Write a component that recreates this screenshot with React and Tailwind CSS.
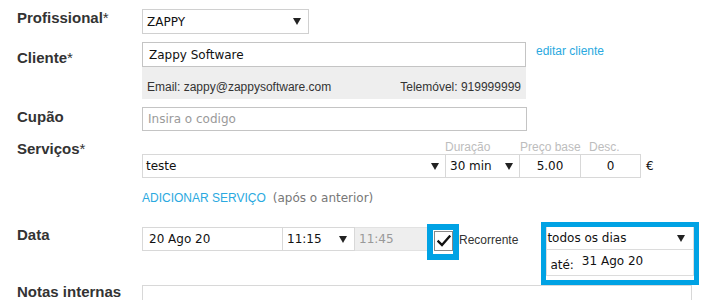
const arial = "font-['Liberation_Sans',Arial,sans-serif]"
const deja = "font-['DejaVu_Sans',Verdana,sans-serif]"

function Arrow() {
  return (
    <svg width="8" height="7" viewBox="0 0 8 7" className="shrink-0">
      <polygon points="0,0 8,0 4,7" fill="#222" />
    </svg>
  )
}

function Label({ children, className = '' }) {
  return (
    <div className={`w-[142px] shrink-0 pl-[17px] ${arial} text-[15px] font-bold leading-[18px] text-[#333] ${className}`}>
      {children}
    </div>
  )
}

function Star() {
  return <span className="font-normal">*</span>
}

export default function App() {
  return (
    <div className={`w-[706px] h-[300px] overflow-hidden bg-white ${deja} text-[12px] text-[#111]`}>
      <div className="flex pt-[9px]">
        <Label>Profissional<Star /></Label>
        <div className="flex h-[25px] w-[167px] items-center justify-between border border-[#d0d0d0] pl-[4px] pr-[7px]">
          <span>ZAPPY</span>
          <Arrow />
        </div>
      </div>

      <div className="mt-[8px] flex">
        <Label className="pt-[7px]">Cliente<Star /></Label>
        <div className="w-[384px]">
          <div className="flex h-[25px] items-center border border-[#c4c4c4] pl-[6px]">Zappy Software</div>
          <div className={`flex h-[32px] items-end justify-between bg-[#eeeeee] px-[5px] pb-[5px] ${arial} leading-[14px] text-[#333]`}>
            <span>Email: zappy@zappysoftware.com</span>
            <span>Telemóvel: 919999999</span>
          </div>
        </div>
        <span className={`ml-[10px] pt-[2px] ${arial} leading-[14px] text-[#2aa9e0]`}>editar cliente</span>
      </div>

      <div className="mt-[8px] flex">
        <Label className="pt-[1px]">Cupão</Label>
        <div className="flex h-[24px] w-[385px] items-center border border-[#c4c4c4] pl-[5px] text-[#9a9a9a]">Insira o codigo</div>
      </div>

      <div className="mt-[9px] flex">
        <Label>Serviços<Star /></Label>
        <div>
          <div className={`flex h-[14px] whitespace-nowrap ${arial} leading-[14px] text-[#bdbdbd]`}>
            <div className="w-[303px]" />
            <div className="w-[74px]">Duração</div>
            <div className="w-[61px] pl-px">Preço base</div>
            <div className="w-[60px] pl-[9px]">Desc.</div>
          </div>
          <div className="flex h-[24px] items-center">
            <div className="flex h-full w-[304px] items-center justify-between border border-[#d8d8d8] pl-[3px] pr-[6px]">
              <span>teste</span>
              <Arrow />
            </div>
            <div className="flex h-full w-[74px] items-center justify-between border-y border-r border-[#d8d8d8] pl-[4px] pr-[6px]">
              <span>30 min</span>
              <Arrow />
            </div>
            <div className="flex h-full w-[61px] items-center justify-center border-y border-r border-[#d8d8d8]">5.00</div>
            <div className="flex h-full w-[60px] items-center justify-center border-y border-r border-[#d8d8d8]">0</div>
            <span className="ml-[5px]">€</span>
          </div>
        </div>
      </div>

      <div className="mt-[13px] flex pl-[142px] leading-[14px]">
        <span className={`${arial} text-[#2aa9e0]`}>ADICIONAR SERVIÇO</span>
        <span className="ml-[7px] text-[#777]">(após o anterior)</span>
      </div>

      <div className="mt-[17px] flex h-[63px] items-start">
        <Label className="pt-[4px]">Data</Label>
        <div className="mt-[5px] flex h-[24px] items-stretch">
          <div className="flex w-[141px] items-center border border-[#d8d8d8] pl-[6px]">20 Ago 20</div>
          <div className="flex w-[72px] items-center justify-between border-y border-r border-[#d8d8d8] pl-[4px] pr-[7px]">
            <span>11:15</span>
            <Arrow />
          </div>
          <div className="flex w-[73px] items-center border-y border-r border-[#e2e2e2] bg-[#eeeeee] pl-[4px] text-[#999]">11:45</div>
        </div>
        <div className="-ml-px mt-[2px] h-[36px] w-[32px] border-[6px] border-[#00a2e4] bg-white">
          <div className="ml-px mt-px flex h-[20px] w-[19px] items-center justify-center border border-[#888]">
            <svg width="14" height="12" viewBox="0 0 14 12">
              <path d="M1.5 6.5 L5 10 L12.5 1.5" stroke="#111" strokeWidth="2.4" fill="none" strokeLinecap="square" />
            </svg>
          </div>
        </div>
        <span className={`mt-[11px] ${arial} leading-[14px] text-[#333]`}>Recorrente</span>
        <div className="ml-[23px] h-[63px] w-[158px] border-[5px] border-[#00a2e4] bg-white">
          <div className="border-x border-b border-[#dcdcdc]">
            <div className="flex h-[23px] items-center justify-between border-b border-[#dcdcdc] pr-[8px] text-[#111]">
              <span>todos os dias</span>
              <Arrow />
            </div>
            <div className="flex h-[25px] items-start">
              <span className="mt-[8px] ml-[3px] leading-[14px]">até:</span>
              <span className="mt-[4px] ml-[8px] leading-[14px]">31 Ago 20</span>
            </div>
          </div>
        </div>
      </div>

      <div className="flex">
        <Label className="-mt-[2px]">Notas internas</Label>
        <div className="h-[40px] w-[550px] border border-[#d8d8d8]" />
      </div>
    </div>
  )
}
